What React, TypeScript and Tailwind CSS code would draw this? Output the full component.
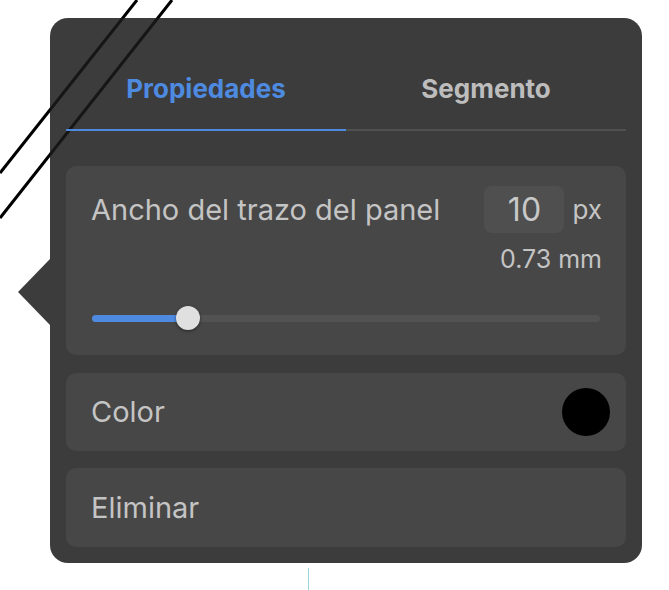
import { useState } from "react";

const panelBg = "bg-[rgba(26,26,26,0.85)]";

export default function App() {
  const [tab, setTab] = useState(0);
  const value = 10;
  const pct = 18.9;

  const tabs = ["Propiedades", "Segmento"];

  return (
    <div className="relative w-[669px] h-[590px] overflow-hidden bg-white pl-[50px] pt-[18px] font-['Inter',sans-serif]">
      {/* guide lines on the canvas behind the popover */}
      <svg className="absolute left-0 top-0" width="669" height="590">
        <line x1="137" y1="0" x2="0" y2="173" stroke="#000" strokeWidth="3" />
        <line x1="172" y1="0" x2="0" y2="218" stroke="#000" strokeWidth="3" />
      </svg>

      <div className={`relative w-[592px] h-[545px] rounded-[18px] ${panelBg} px-4`}>
        {/* arrow */}
        <div className="absolute left-[-32px] top-[241px] h-0 w-0 border-y-[33px] border-y-transparent border-r-[32px] border-r-[rgba(26,26,26,0.85)]" />

        <div className="flex">
          {tabs.map((t, i) => (
            <button
              key={t}
              onClick={() => setTab(i)}
              className={`flex-1 h-[113px] pt-[30px] flex items-center justify-center text-[26px] font-bold border-b-2 ${
                tab === i
                  ? "text-[#4d8ae0] border-[#4d8ae0]"
                  : "text-[#bdbdbd] border-[#505050]"
              }`}
            >
              {t}
            </button>
          ))}
        </div>

        <div className="mt-[35px] h-[189px] rounded-[10px] bg-[#474747] pl-[25px] pr-[24px] pt-[20px]">
          <div className="flex h-[47px] items-center justify-between">
            <span className="text-[29px] text-[#c4c4c4]">Ancho del trazo del panel</span>
            <div className="flex items-center">
              <div className="flex h-[47px] w-[80px] items-center justify-center rounded-[8px] bg-[#4f4f4f] text-[32px] text-[#c8c8c8]">
                {value}
              </div>
              <span className="ml-[8px] text-[26px] text-[#c4c4c4]">px</span>
            </div>
          </div>
          <div className="mt-[11px] text-right text-[25px] leading-[30px] text-[#c4c4c4]">0.73 mm</div>
          <div className="relative mt-[32px] ml-[1px] flex h-[24px] w-[508px] items-center">
            <div className="h-[7px] w-full rounded-full bg-[#525252]" />
            <div
              className="absolute left-0 h-[7px] rounded-full bg-[#4d8ae0]"
              style={{ width: `${pct}%` }}
            />
            <div
              className="absolute h-[24px] w-[24px] -translate-x-1/2 rounded-full bg-[#e0e0e0] shadow-[0_1px_3px_rgba(0,0,0,0.5)]"
              style={{ left: `${pct}%` }}
            />
          </div>
        </div>

        <div className="mt-[18px] flex h-[78px] items-center justify-between rounded-[10px] bg-[#474747] pl-[25px] pr-[16px]">
          <span className="text-[29px] text-[#c4c4c4]">Color</span>
          <div className="h-[48px] w-[48px] rounded-full bg-black" />
        </div>

        <div className="mt-[17px] flex h-[79px] items-center rounded-[10px] bg-[#474747] pl-[25px]">
          <span className="text-[29px] text-[#c4c4c4]">Eliminar</span>
        </div>
      </div>

      <div className="ml-[258px] mt-[5px] h-[22px] w-px bg-[#9ad6de]" />
    </div>
  );
}
